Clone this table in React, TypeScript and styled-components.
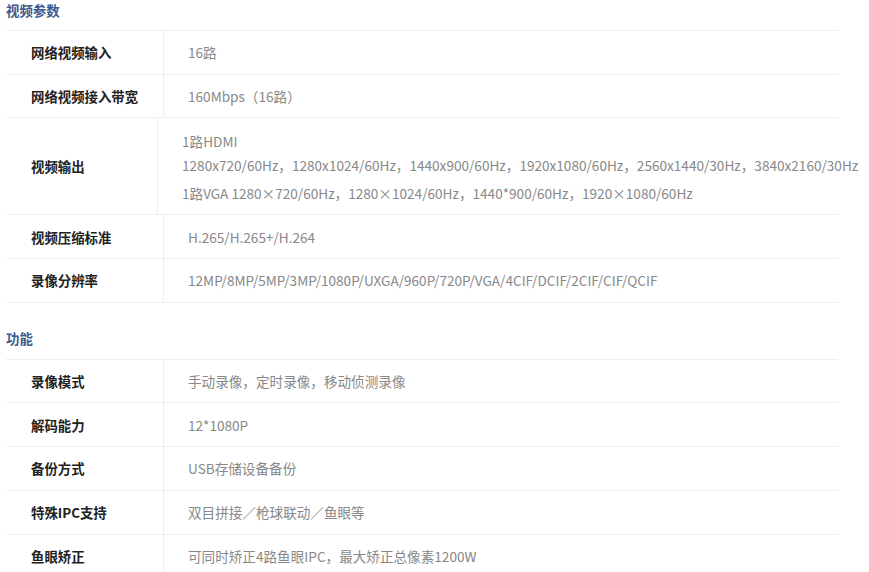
import React from "react"
import styled, { createGlobalStyle } from "styled-components"

const GlobalStyle = createGlobalStyle`
	body {
		margin: 0;
		background: #fff;
		font-family: "Noto Sans CJK SC", "Noto Sans", sans-serif;
		font-size: 13.4px;
	}
`

const Page = styled.div`
	padding: 0 0 0 6px;
	width: 832px;
`

const SectionTitle = styled.div<{ $first?: boolean }>`
	height: 20px;
	line-height: 20px;
	margin: ${(p) => (p.$first ? "0 0 10px" : "25px 0 11px")};
	font-size: 13.4px;
	font-weight: 700;
	color: #3a5a8f;
`

const Table = styled.div`
	border-top: 1px solid #eeeeee;
`

const Row = styled.div`
	display: flex;
	min-height: 42.7px;
	border-bottom: 1px solid #eeeeee;
`

const Label = styled.div<{ $width: number }>`
	flex: 0 0 auto;
	width: ${(p) => p.$width}px;
	box-sizing: border-box;
	padding-left: 25px;
	display: flex;
	align-items: center;
	border-right: 1px solid #eeeeee;
	font-weight: 700;
	color: #222;
`

const Value = styled.div`
	flex: 1;
	display: flex;
	align-items: center;
	padding-left: 24px;
	font-size: 13.6px;
	color: #888;
	white-space: nowrap;
`

const MultiValue = styled.div`
	flex: 1;
	padding: 11px 0 9px 24px;
	font-size: 13.6px;
	color: #888;
	white-space: nowrap;
`

const Line = styled.div<{ $gap?: number }>`
	line-height: 24px;
	margin-top: ${(p) => p.$gap ?? 0}px;
`

type Spec = { label: string; value: string }

const video: Spec[] = [
	{ label: "网络视频输入", value: "16路" },
	{ label: "网络视频接入带宽", value: "160Mbps（16路）" },
]

const videoRest: Spec[] = [
	{ label: "视频压缩标准", value: "H.265/H.265+/H.264" },
	{ label: "录像分辨率", value: "12MP/8MP/5MP/3MP/1080P/UXGA/960P/720P/VGA/4CIF/DCIF/2CIF/CIF/QCIF" },
]

const features: Spec[] = [
	{ label: "录像模式", value: "手动录像，定时录像，移动侦测录像" },
	{ label: "解码能力", value: "12*1080P" },
	{ label: "备份方式", value: "USB存储设备备份" },
	{ label: "特殊IPC支持", value: "双目拼接／枪球联动／鱼眼等" },
	{ label: "鱼眼矫正", value: "可同时矫正4路鱼眼IPC，最大矫正总像素1200W" },
]

const SpecRow = ({ label, value }: Spec) => (
	<Row>
		<Label $width={158}>{label}</Label>
		<Value>{value}</Value>
	</Row>
)

export default function App() {
	return (
		<>
			<GlobalStyle />
			<Page>
				<SectionTitle $first>视频参数</SectionTitle>
				<Table>
					{video.map((s) => (
						<SpecRow key={s.label} {...s} />
					))}
					<Row>
						<Label $width={152}>视频输出</Label>
						<MultiValue>
							<Line>1路HDMI</Line>
							<Line>
								1280x720/60Hz，1280x1024/60Hz，1440x900/60Hz，1920x1080/60Hz，2560x1440/30Hz，3840x2160/30Hz
							</Line>
							<Line $gap={4}>1路VGA 1280×720/60Hz，1280×1024/60Hz，1440*900/60Hz，1920×1080/60Hz</Line>
						</MultiValue>
					</Row>
					{videoRest.map((s) => (
						<SpecRow key={s.label} {...s} />
					))}
				</Table>

				<SectionTitle>功能</SectionTitle>
				<Table>
					{features.map((s) => (
						<SpecRow key={s.label} {...s} />
					))}
				</Table>
			</Page>
		</>
	)
}
